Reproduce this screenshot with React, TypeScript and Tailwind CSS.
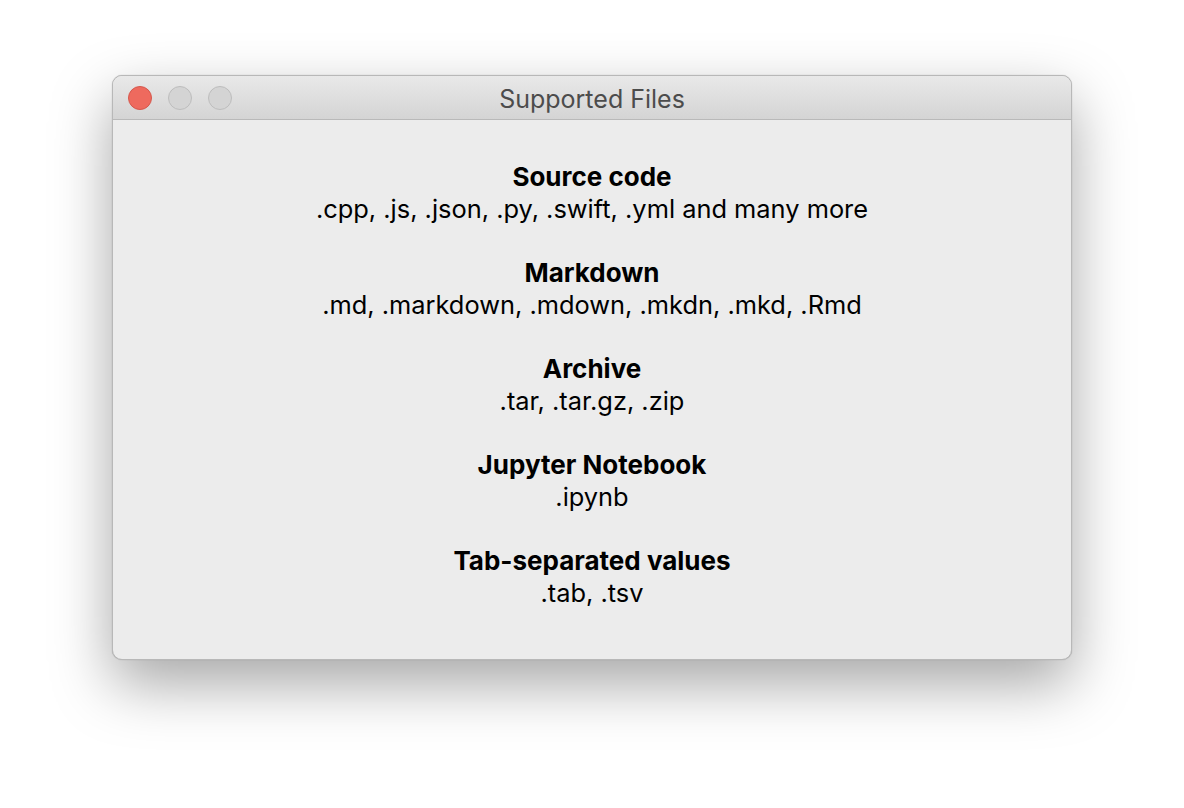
import React from "react";

const groups = [
  { title: "Source code", items: ".cpp, .js, .json, .py, .swift, .yml and many more" },
  { title: "Markdown", items: ".md, .markdown, .mdown, .mkdn, .mkd, .Rmd" },
  { title: "Archive", items: ".tar, .tar.gz, .zip" },
  { title: "Jupyter Notebook", items: ".ipynb" },
  { title: "Tab-separated values", items: ".tab, .tsv" },
];

export default function App() {
  return (
    <div
      className="w-[1184px] h-[808px] bg-white pt-[75px] pl-[112px]"
      style={{ fontFamily: "Inter, 'Noto Sans', sans-serif" }}
    >
      <div className="w-[960px] h-[585px] rounded-[10px] bg-[#ececec] border border-[#b8b8b8] shadow-[0_24px_60px_rgba(0,0,0,0.35),0_0_1px_rgba(0,0,0,0.3)] overflow-hidden flex flex-col">
        <div className="relative h-[44px] shrink-0 bg-gradient-to-b from-[#e9e9e9] to-[#d4d4d4] border-b border-[#b9b9b9] flex items-center justify-center">
          <div className="absolute left-[15px] top-[10px] flex gap-[16px]">
            <div className="w-[24px] h-[24px] rounded-full bg-[#ee6a5e] border border-[#d5584d]" />
            <div className="w-[24px] h-[24px] rounded-full bg-[#d4d4d4] border border-[#bdbdbd]" />
            <div className="w-[24px] h-[24px] rounded-full bg-[#d4d4d4] border border-[#bdbdbd]" />
          </div>
          <span className="text-[25px] text-[#4c4c4c] leading-[30px] mt-[3px]">Supported Files</span>
        </div>
        <div className="flex flex-col items-center pt-[41px] gap-[32px] text-black leading-[32px]">
          {groups.map((g) => (
            <div key={g.title} className="flex flex-col items-center">
              <div className="font-bold text-[26px]">{g.title}</div>
              <div className="text-[25.4px]">{g.items}</div>
            </div>
          ))}
        </div>
      </div>
    </div>
  );
}
